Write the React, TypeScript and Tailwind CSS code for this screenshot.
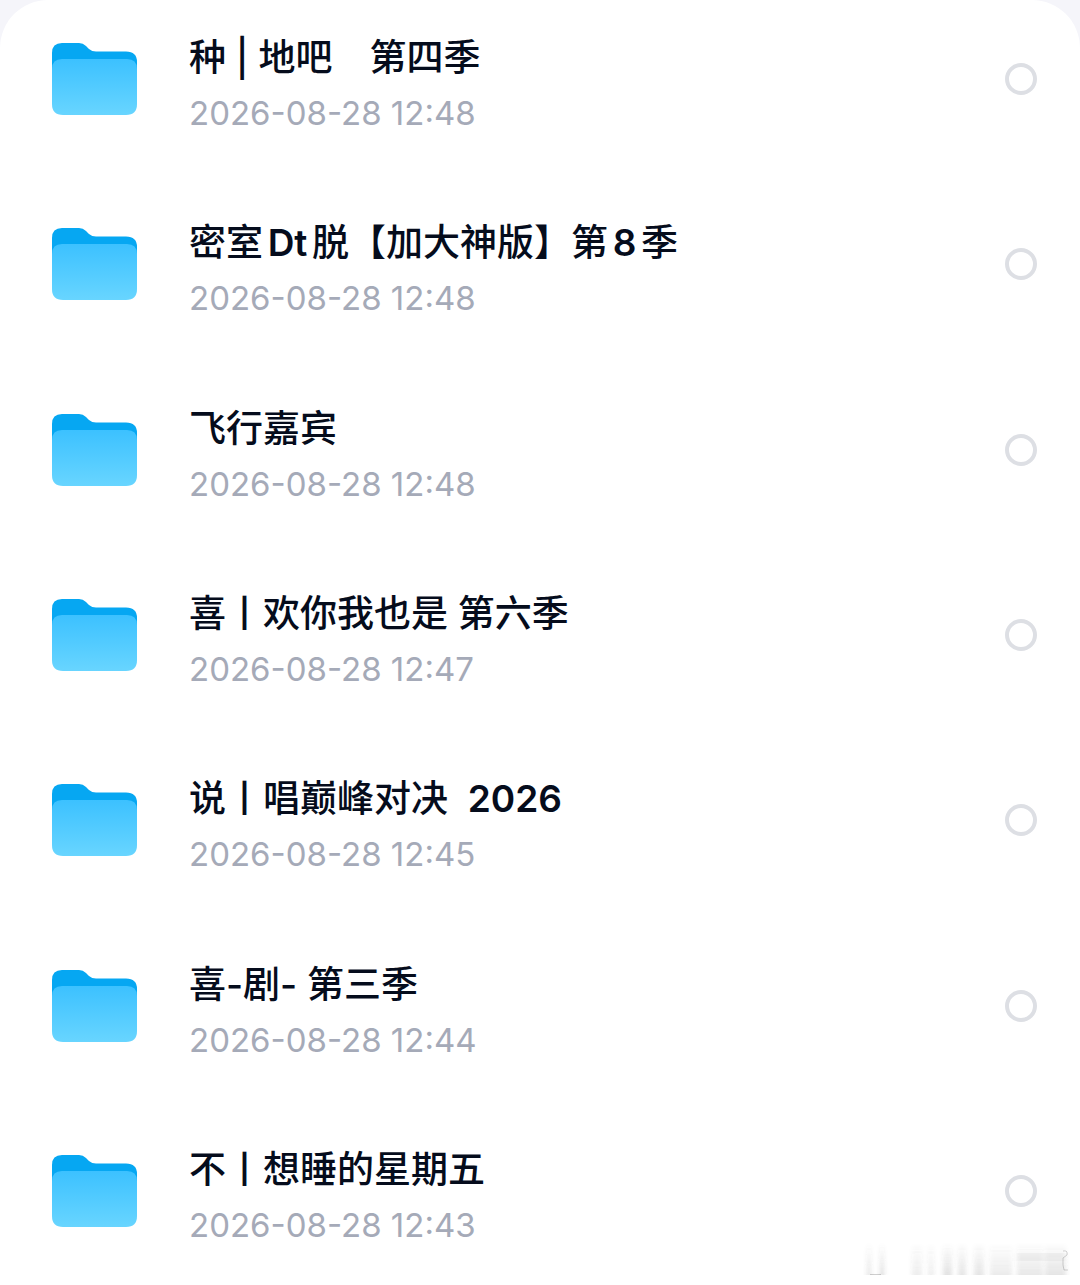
import { useState } from "react";

type Folder = { name: string; modified: string };

const FOLDERS: Folder[] = [
  { name: "种 | 地吧　第四季", modified: "2026-08-28 12:48" },
  { name: "密室Dt脱【加大神版】第8季", modified: "2026-08-28 12:48" },
  { name: "飞行嘉宾", modified: "2026-08-28 12:48" },
  { name: "喜丨欢你我也是 第六季", modified: "2026-08-28 12:47" },
  { name: "说丨唱巅峰对决  2026", modified: "2026-08-28 12:45" },
  { name: "喜-剧- 第三季", modified: "2026-08-28 12:44" },
  { name: "不丨想睡的星期五", modified: "2026-08-28 12:43" },
];

function FolderIcon() {
  return (
    <svg viewBox="0 0 86 74" className="mt-3 h-[74px] w-[86px] shrink-0" aria-hidden>
      <defs>
        <linearGradient id="folder-front" x1="0" y1="0" x2="0" y2="1">
          <stop offset="0" stopColor="#3cc1ff" />
          <stop offset="1" stopColor="#68d5ff" />
        </linearGradient>
      </defs>
      <path
        d="M1 11Q1 1 11 1H28Q32 1 35 4L38 7Q41 9.500 45 9.500H75Q86 9.500 86 20V32H1Z"
        fill="#06a7f2"
      />
      <path
        d="M1 27Q1 17 11 17H76Q86 17 86 27V62Q86 73 75 73H12Q1 73 1 62Z"
        fill="url(#folder-front)"
      />
    </svg>
  );
}

/** Latin runs sit one weight heavier so they hold up next to the Chinese. */
function FolderName({ name }: { name: string }) {
  return name
    .split(/([A-Za-z0-9]+)/)
    .map((part, i) =>
      i % 2 ? (
        <span key={i} className="font-semibold">
          {part}
        </span>
      ) : (
        part
      ),
    );
}

/** One folder: icon, name over its date, and the round tick box. */
function FolderRow({ folder }: { folder: Folder }) {
  const [checked, setChecked] = useState(false);

  return (
    <li>
      <label className="flex cursor-pointer items-start">
        <FolderIcon />
        <span className="ml-[52px] min-w-0 flex-1">
          <span className="block text-[37px] leading-[56px] font-medium whitespace-pre text-[#050c1c] [text-autospace:normal]">
            <FolderName name={folder.name} />
          </span>
          <time className="block text-[33px] leading-[54px] text-[#a5aab8]">
            {folder.modified}
          </time>
        </span>
        <input
          type="checkbox"
          checked={checked}
          onChange={(e) => setChecked(e.target.checked)}
          className="mt-[33px] h-8 w-8 shrink-0 cursor-pointer appearance-none rounded-full border-4 border-[#dddfe4] checked:border-[#06a7f2] checked:bg-[#06a7f2]"
        />
      </label>
    </li>
  );
}

const STREAKS = [
  { x: 7, w: 4, o: 0.16 },
  { x: 20, w: 4, o: 0.2 },
  { x: 52, w: 10, o: 0.1 },
  { x: 68, w: 6, o: 0.1 },
  { x: 83, w: 9, o: 0.17 },
  { x: 98, w: 8, o: 0.15 },
  { x: 114, w: 10, o: 0.15 },
  { x: 130, w: 22, o: 0.11 },
  { x: 157, w: 26, o: 0.13 },
  { x: 185, w: 21, o: 0.15 },
];

/** Faded mark in the bottom corner. */
function Watermark() {
  return (
    <svg
      viewBox="0 0 216 40"
      className="pointer-events-none absolute right-1 bottom-1 h-10 w-[216px]"
      aria-hidden
    >
      <defs>
        <linearGradient id="streak" x1="0" y1="0" x2="0" y2="1">
          <stop offset="0" stopColor="#555" stopOpacity="0" />
          <stop offset="1" stopColor="#555" />
        </linearGradient>
        <filter id="soften">
          <feGaussianBlur stdDeviation="2 0.3" />
        </filter>
      </defs>
      <g filter="url(#soften)">
        {STREAKS.map((s) => (
          <rect key={s.x} x={s.x} y="2" width={s.w} height="32" fill="url(#streak)" opacity={s.o} />
        ))}
        <path d="M157 16H205" stroke="#555" strokeWidth="8" opacity="0.05" />
      </g>
      <path
        d="M10 33.500H21M203 10Q208 9 207 14L203 17V24L204 29H208"
        fill="none"
        stroke="#777"
        strokeWidth="1"
        opacity="0.35"
      />
    </svg>
  );
}

export default function App() {
  return (
    <div className="min-h-screen bg-[#f5f5fa] font-['Inter','Noto_Sans_CJK_SC',sans-serif]">
      <main className="relative min-h-screen rounded-t-[48px] bg-white">
        <ul className="flex min-h-screen flex-col justify-between gap-8 pt-[30px] pr-[43px] pb-[33px] pl-[51px]">
          {FOLDERS.map((folder) => (
            <FolderRow key={folder.name} folder={folder} />
          ))}
        </ul>
        <Watermark />
      </main>
    </div>
  );
}
